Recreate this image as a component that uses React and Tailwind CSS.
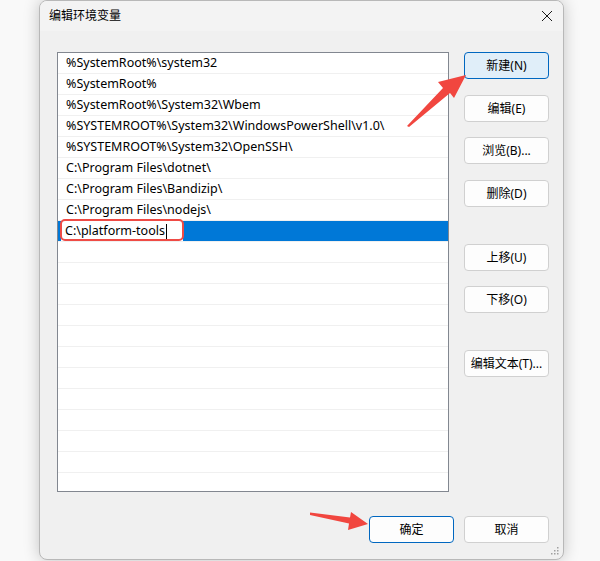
import React from 'react';

const paths = [
  '%SystemRoot%\\system32',
  '%SystemRoot%',
  '%SystemRoot%\\System32\\Wbem',
  '%SYSTEMROOT%\\System32\\WindowsPowerShell\\v1.0\\',
  '%SYSTEMROOT%\\System32\\OpenSSH\\',
  'C:\\Program Files\\dotnet\\',
  'C:\\Program Files\\Bandizip\\',
  'C:\\Program Files\\nodejs\\',
];

const font = { fontFamily: '"Noto Sans", "Noto Sans CJK SC", sans-serif' };

const Btn = ({ children, primary, focus, className = '' }) => (
  <div
    className={
      'w-[85px] h-[27px] rounded-[4px] border flex items-center justify-center text-[12px] text-black ' +
      (focus
        ? 'bg-[#e0eef9] border-[#0067c0] '
        : primary
        ? 'bg-[#fdfdfd] border-[#0067c0] '
        : 'bg-[#fdfdfd] border-[#d0d0d0] ') +
      className
    }
  >
    {children}
  </div>
);

const App = () => {
  const empty = Array.from({ length: 13 });

  return (
    <div className="relative w-[600px] h-[561px] overflow-hidden bg-[#f9f9f9] pl-[39px]" style={font}>
      <div className="relative w-[525px] h-[560px] flex flex-col bg-[#f0f0f0] border border-[#b8b8b8] rounded-[8px] shadow-[0_0_16px_rgba(0,0,0,0.22)] overflow-hidden">
        {/* title bar */}
        <div className="h-[30px] flex items-center justify-between pl-[9px] pr-[9px] bg-[#f3f3f3]">
          <span className="text-[12px] text-black">编辑环境变量</span>
          <svg width="12" height="12" viewBox="0 0 12 12" className="mr-[1px]">
            <path d="M1 1 L11 11 M11 1 L1 11" stroke="#1a1a1a" strokeWidth="1" />
          </svg>
        </div>

        <div className="flex-1 flex flex-col pl-[17px] pr-[14px] pt-[21px]">
          <div className="flex gap-[15px]">
            {/* list */}
            <div className="w-[392px] h-[440px] border border-[#828790] bg-white overflow-hidden">
              {paths.map(p => (
                <div key={p} className="h-[21px] border-b border-[#f0f0f0] flex items-center pl-[8px] text-[12.5px] text-black whitespace-nowrap">
                  {p}
                </div>
              ))}
              <div className="h-[21px] border-b border-[#f0f0f0] bg-[#0078d7] flex items-center">
                <div className="relative ml-[3px] w-[122px] h-[20px] bg-white flex items-center pl-[4px] text-[12.5px] text-black whitespace-nowrap">
                  C:\platform-tools
                  <span className="inline-block w-[1px] h-[15px] bg-black ml-[1px]" />
                  <div className="absolute -left-[1px] -top-[2px] w-[124px] h-[22px] border-2 border-[#ef4b45] rounded-[5px]" />
                </div>
              </div>
              {empty.map((_, i) => (
                <div key={i} className="h-[21px] border-b border-[#f0f0f0]" />
              ))}
            </div>

            {/* buttons */}
            <div className="flex flex-col">
              <Btn focus>新建(N)</Btn>
              <Btn className="mt-[16px]">编辑(E)</Btn>
              <Btn className="mt-[15px]">浏览(B)...</Btn>
              <Btn className="mt-[16px]">删除(D)</Btn>
              <Btn className="mt-[37px]">上移(U)</Btn>
              <Btn className="mt-[15px]">下移(O)</Btn>
              <Btn className="mt-[37px]">编辑文本(T)...</Btn>
            </div>
          </div>

          <div className="flex justify-end gap-[10px] mt-[24px]">
            <Btn primary>确定</Btn>
            <Btn>取消</Btn>
          </div>
        </div>

        {/* resize grip */}
        <svg width="10" height="10" viewBox="0 0 10 10" className="absolute right-[3px] bottom-[3px]">
          {[[8, 2], [8, 5], [5, 5], [8, 8], [5, 8], [2, 8]].map(([x, y]) => (
            <rect key={x + '-' + y} x={x - 1} y={y - 1} width="1.5" height="1.5" fill="#a0a0a0" />
          ))}
        </svg>
      </div>

      {/* annotation arrows */}
      <svg width="600" height="561" className="absolute left-0 top-0 pointer-events-none">
        <polygon
          points="407,126 443,88 438,82 466,75 454,98 450,93 409,127"
          fill="#f1463f"
        />
        <polygon
          points="310,512.5 350,517.5 351,512 368,524 348,530 349,523.5 310,515"
          fill="#f1463f"
        />
      </svg>
    </div>
  );
};

export default App;
